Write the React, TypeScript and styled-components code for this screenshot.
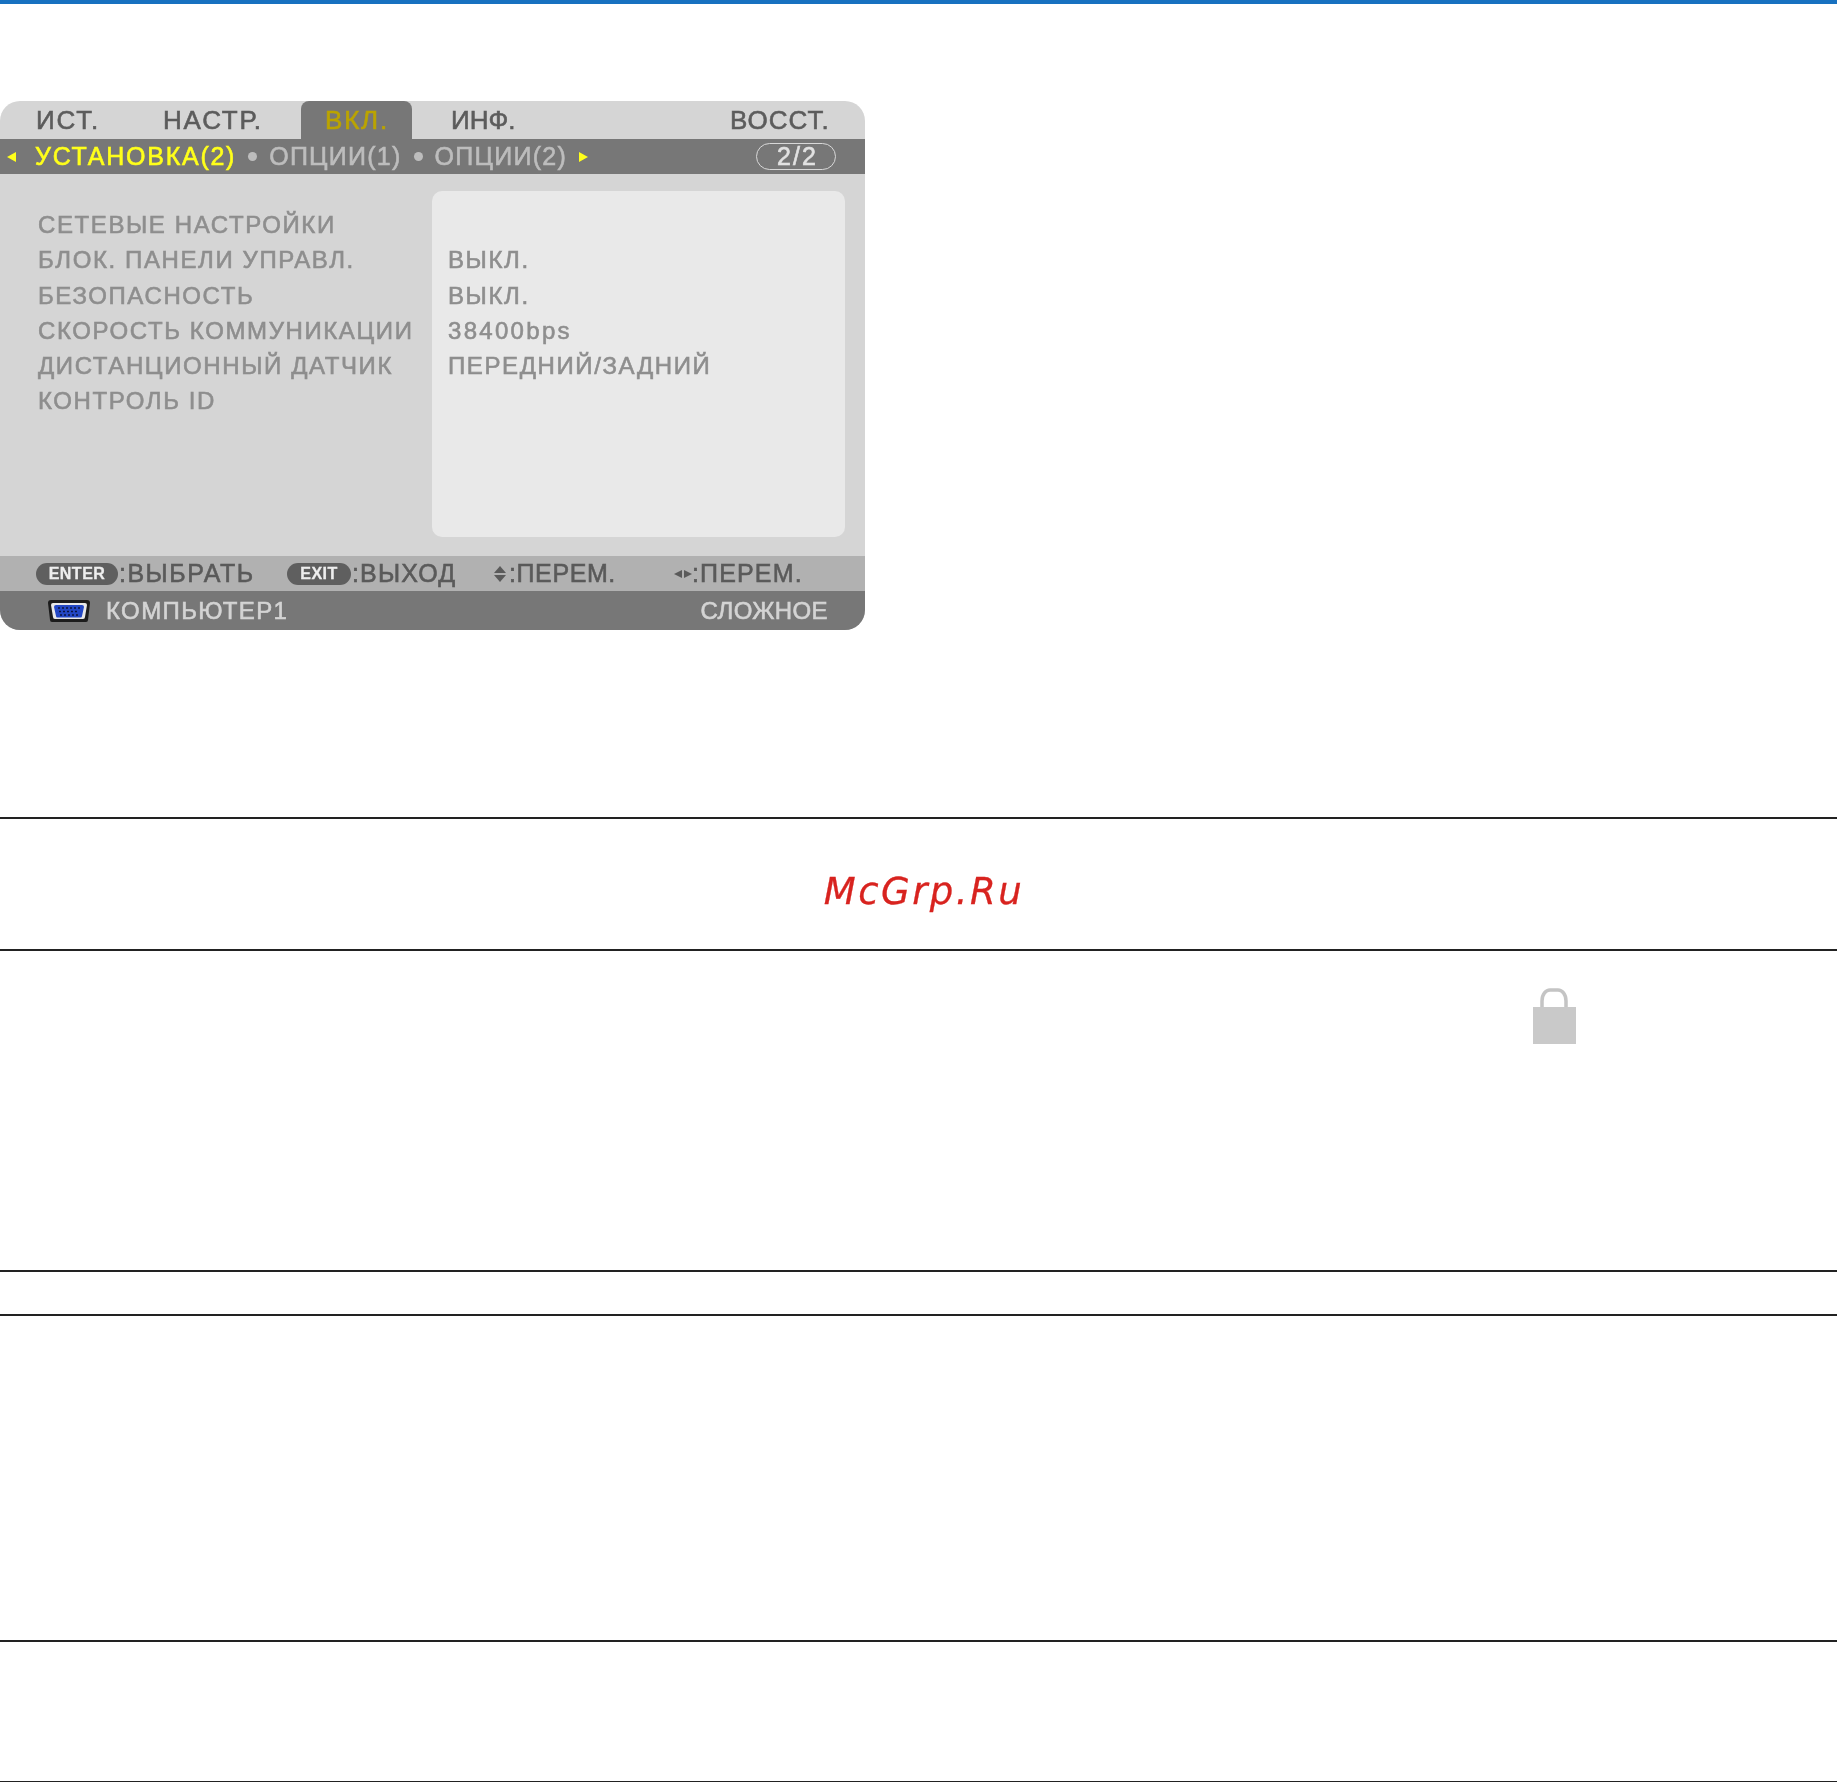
import styled, { createGlobalStyle } from 'styled-components';

const GlobalStyle = createGlobalStyle`
	html, body {
		margin: 0;
		padding: 0;
		background: #fff;
		font-family: "Liberation Sans", Arial, sans-serif;
	}
`;

const TopBar = styled.div`
	height: 4px;
	background: #1771c0;
`;

const MenuArea = styled.section`
	height: 813px;
	padding-top: 97px;
	box-sizing: border-box;
`;

const Menu = styled.div`
	width: 865px;
	height: 529px;
	display: flex;
	flex-direction: column;
	border-radius: 20px;
	overflow: hidden;
	background: #d5d5d5;
	font-size: 25px;
	letter-spacing: 1.25px;
	-webkit-text-stroke: 0.6px currentColor;
	filter: blur(0.55px);
`;

const Tabs = styled.div`
	height: 38px;
	display: flex;
	flex: none;
	font-size: 26px;
	letter-spacing: 1.8px;
`;

const Tab = styled.div<{ $left: number; $width: number; $active?: boolean; $spacing?: number }>`
	box-sizing: border-box;
	width: ${(p) => p.$width}px;
	padding-left: ${(p) => p.$left}px;
	line-height: 38px;
	white-space: nowrap;
	color: ${(p) => (p.$active ? '#bba400' : '#5c5c5c')};
	background: ${(p) => (p.$active ? '#777' : 'transparent')};
	border-radius: ${(p) => (p.$active ? '8px 8px 0 0' : '0')};
	${(p) => p.$spacing !== undefined && `letter-spacing: ${p.$spacing}px;`}
`;

const SubTabs = styled.div`
	height: 35px;
	flex: none;
	display: flex;
	align-items: center;
	background: #777;
	padding-left: 7px;
	color: #bdbdbd;
`;

const SubTab = styled.span<{ $current?: boolean }>`
	color: ${(p) => (p.$current ? '#ffff1a' : '#bdbdbd')};
	letter-spacing: ${(p) => (p.$current ? '1.75px' : '1.25px')};
	margin-left: ${(p) => (p.$current ? '19px' : '0')};
	white-space: nowrap;
`;

const Dot = styled.i`
	width: 9px;
	height: 9px;
	margin: 0 12px 0 12px;
	border-radius: 50%;
	background: #bdbdbd;
	flex: none;
`;

const Arrow = styled.i<{ $dir: 'left' | 'right'; $color?: string; $size?: number; $gap?: number }>`
	width: 0;
	height: 0;
	flex: none;
	margin-left: ${(p) => p.$gap ?? 0}px;
	border-top: ${(p) => p.$size ?? 5}px solid transparent;
	border-bottom: ${(p) => p.$size ?? 5}px solid transparent;
	${(p) => (p.$dir === 'left' ? 'border-right' : 'border-left')}: ${(p) => (p.$size ?? 5) + 4}px solid ${(p) => p.$color ?? '#ffff1a'};
`;

const Pager = styled.div`
	width: 80px;
	height: 27px;
	margin-left: auto;
	margin-right: 29px;
	padding-left: 3px;
	border: 1.5px solid #d8d8d8;
	border-radius: 14px;
	box-sizing: border-box;
	display: flex;
	align-items: center;
	justify-content: center;
	color: #e2e2e2;
	letter-spacing: 2px;
`;

const Body = styled.div`
	flex: 1;
	display: grid;
	grid-template-columns: 432px 413px;
	padding: 17px 0 19px;
	min-height: 0;
	color: #8e8e8e;
	font-size: 24px;
`;

const Labels = styled.div`
	padding: 16px 0 0 38px;
`;

const Values = styled.div`
	background: #e9e9e9;
	border-radius: 10px;
	padding: 16px 0 0 16px;
`;

const Row = styled.div<{ $wide?: boolean }>`
	height: 35.25px;
	line-height: 36px;
	white-space: nowrap;
	letter-spacing: ${(p) => (p.$wide ? '2.3px' : '1.6px')};
`;

const Hints = styled.div`
	height: 35px;
	flex: none;
	display: flex;
	align-items: center;
	background: #b1b1b1;
	color: #5a5a5a;
	padding-left: 36px;
	white-space: nowrap;
	letter-spacing: 1.15px;
`;

const Key = styled.span<{ $width: number }>`
	width: ${(p) => p.$width}px;
	height: 22px;
	margin-right: 1px;
	border-radius: 11px;
	background: #5f5f5f;
	color: #eee;
	font-size: 16px;
	font-weight: 700;
	letter-spacing: 0.5px;
	-webkit-text-stroke: 0.3px currentColor;
	display: flex;
	align-items: center;
	justify-content: center;
	flex: none;
`;

const Hint = styled.div<{ $width: number; $spacing?: number }>`
	width: ${(p) => p.$width}px;
	display: flex;
	align-items: center;
	flex: none;
	${(p) => p.$spacing !== undefined && `letter-spacing: ${p.$spacing}px;`}
`;

const Updown = styled.span`
	display: flex;
	flex-direction: column;
	gap: 2px;
	margin-right: 3px;
`;

const ArrowV = styled.i<{ $up?: boolean }>`
	width: 0;
	height: 0;
	border-left: 6px solid transparent;
	border-right: 6px solid transparent;
	${(p) => (p.$up ? 'border-bottom' : 'border-top')}: 7px solid #5a5a5a;
`;

const Status = styled.div`
	height: 39px;
	flex: none;
	display: flex;
	align-items: center;
	background: #777;
	color: #d4d4d4;
	padding: 0 37px 0 47px;
	font-size: 24px;
	letter-spacing: 1.4px;
`;

const StatusMode = styled.span`
	margin-left: auto;
	letter-spacing: 0.4px;
`;

const ConnectorIcon = styled.svg`
	width: 44px;
	height: 24px;
	margin-right: 15px;
	flex: none;
`;

const Band = styled.section<{ $height: number }>`
	height: ${(p) => p.$height}px;
	box-sizing: border-box;
	border-top: 2px solid #222;
`;

const AdBand = styled(Band)`
	display: flex;
	justify-content: center;
	padding: 52px 0 0 11px;
`;

const AdLink = styled.span`
	font-family: "DejaVu Sans", sans-serif;
	font-style: oblique;
	font-size: 37px;
	line-height: 42px;
	letter-spacing: 2.5px;
	color: #d8231f;
	-webkit-text-stroke: 0.3px currentColor;
	filter: blur(0.3px);
`;

const LockBand = styled(Band)`
	display: flex;
	justify-content: flex-end;
	padding: 37px 261px 0 0;
`;

const LockIcon = styled.svg`
	width: 44px;
	height: 58px;
	filter: blur(0.5px);
`;

export default function App() {
	return (
		<>
			<GlobalStyle />
			<TopBar />
			<MenuArea>
				<Menu>
					<Tabs>
						<Tab $left={36} $width={163}>ИСТ.</Tab>
						<Tab $left={0} $width={138}>НАСТР.</Tab>
						<Tab $left={24} $width={111} $active>ВКЛ.</Tab>
						<Tab $left={39} $width={318} $spacing={0}>ИНФ.</Tab>
						<Tab $left={0} $width={115} $spacing={1}>ВОССТ.</Tab>
					</Tabs>
					<SubTabs>
						<Arrow $dir="left" />
						<SubTab $current>УСТАНОВКА(2)</SubTab>
						<Dot />
						<SubTab>ОПЦИИ(1)</SubTab>
						<Dot />
						<SubTab>ОПЦИИ(2)</SubTab>
						<Arrow $dir="right" $gap={12} />
						<Pager>2/2</Pager>
					</SubTabs>
					<Body>
						<Labels>
							<Row>СЕТЕВЫЕ НАСТРОЙКИ</Row>
							<Row>БЛОК. ПАНЕЛИ УПРАВЛ.</Row>
							<Row>БЕЗОПАСНОСТЬ</Row>
							<Row>СКОРОСТЬ КОММУНИКАЦИИ</Row>
							<Row>ДИСТАНЦИОННЫЙ ДАТЧИК</Row>
							<Row>КОНТРОЛЬ ID</Row>
						</Labels>
						<Values>
							<Row />
							<Row>ВЫКЛ.</Row>
							<Row>ВЫКЛ.</Row>
							<Row $wide>38400bps</Row>
							<Row>ПЕРЕДНИЙ/ЗАДНИЙ</Row>
						</Values>
					</Body>
					<Hints>
						<Hint $width={251} $spacing={1.5}>
							<Key $width={82}>ENTER</Key>:ВЫБРАТЬ
						</Hint>
						<Hint $width={207}>
							<Key $width={64}>EXIT</Key>:ВЫХОД
						</Hint>
						<Hint $width={180} $spacing={0.6}>
							<Updown>
								<ArrowV $up />
								<ArrowV />
							</Updown>
							:ПЕРЕМ.
						</Hint>
						<Hint $width={150}>
							<Arrow $dir="left" $color="#5a5a5a" $size={4} />
							<Arrow $dir="right" $color="#5a5a5a" $size={4} $gap={2} />
							:ПЕРЕМ.
						</Hint>
					</Hints>
					<Status>
						<ConnectorIcon viewBox="0 0 44 24">
							<path d="M4 1h36a3 3 0 0 1 3 3l-2 17a2 2 0 0 1-2 2H5a2 2 0 0 1-2-2L1 4a3 3 0 0 1 3-3z" fill="#1c1c1c" />
							<path d="M6 4h32a2 2 0 0 1 2 2l-2 12a2 2 0 0 1-2 2H8a2 2 0 0 1-2-2L4 6a2 2 0 0 1 2-2z" fill="#e8e8e8" />
							<path d="M9 6h26a2 2 0 0 1 2 2l-2 9a1.500 1.500 0 0 1-1.500 1.500h-23A1.500 1.500 0 0 1 9 17L7 8a2 2 0 0 1 2-2z" fill="#2347c4" />
							<path d="M11 9h22M12 12.500h20M13 16h18" stroke="#0c1440" strokeWidth="1.600" strokeDasharray="2 2" />
						</ConnectorIcon>
						КОМПЬЮТЕР1
						<StatusMode>СЛОЖНОЕ</StatusMode>
					</Status>
				</Menu>
			</MenuArea>
			<AdBand $height={132}>
				<AdLink>McGrp.Ru</AdLink>
			</AdBand>
			<LockBand $height={321}>
				<LockIcon viewBox="0 0 44 58">
					<path d="M10 23V13C10 6 14 2 18 2h8c4 0 8 4 8 11v10" fill="none" stroke="#c4c4c4" strokeWidth="3.500" />
					<rect x="1" y="19" width="43" height="37" fill="#c9c9c9" />
				</LockIcon>
			</LockBand>
			<Band $height={44} />
			<Band $height={326} />
			<Band $height={141} />
			<Band $height={2} />
		</>
	);
}
